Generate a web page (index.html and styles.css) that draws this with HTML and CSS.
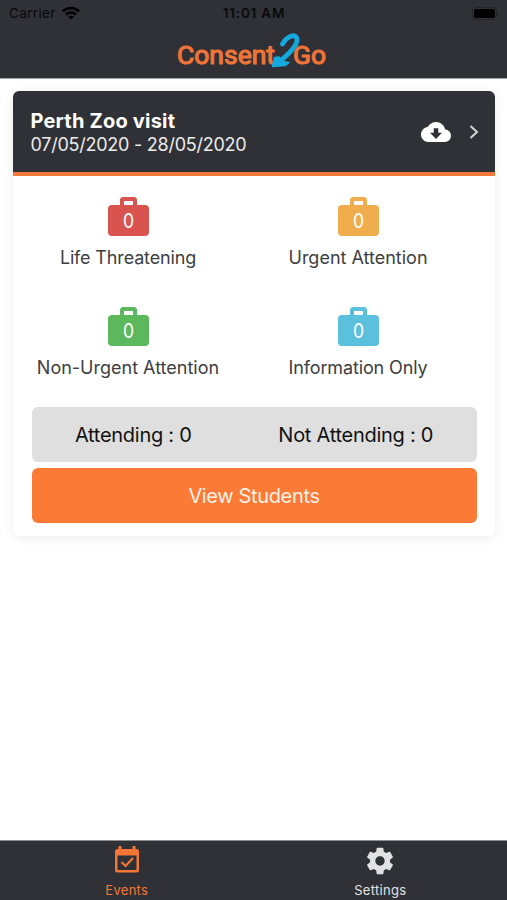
FILE: index.html
```html
<!DOCTYPE html>
<html lang="en">

<head>
    <meta charset="UTF-8">
    <meta name="viewport" content="width=device-width, initial-scale=1.0">
    <title>Consent2Go</title>
    <link rel="stylesheet" href="styles.css">
</head>

<body>
    <header class="top-bar">
        <div class="status">
            <div class="carrier">
                <span>Carrier</span>
                <svg width="18" height="14" viewBox="0 0 18 14" fill="none" stroke="#000" stroke-width="2.6">
                    <path d="M1 5.2C5.5 .9 12.500 .9 17 5.200" />
                    <path d="M4 8.500C6.800 5.800 11.200 5.800 14 8.500" />
                    <path d="M9 13.500L6.200 10.700C7.700 9.300 10.300 9.300 11.800 10.700Z" fill="#000" stroke="none" />
                </svg>
            </div>
            <span class="time">11:01 AM</span>
            <svg class="battery" width="27" height="13" viewBox="0 0 27 13">
                <rect x=".5" y=".5" width="24" height="12" rx="3.500" fill="none" stroke="#242528" />
                <rect x="2" y="2" width="21" height="9" rx="2" fill="#000" />
                <path d="M25.500 4.500q1.500 2 0 4z" fill="#202124" />
            </svg>
        </div>
        <svg class="logo" width="150" height="38" viewBox="0 0 150 38">
            <g class="logo-text">
                <text x="0" y="31.500" textLength="98" lengthAdjust="spacingAndGlyphs">Consent</text>
                <text x="116" y="31.500" textLength="33" lengthAdjust="spacingAndGlyphs">Go</text>
            </g>
            <path d="M105.500 12C109 5 117 1.500 119.500 5.500C122.500 11.500 112 22 102 30" fill="none" stroke="#14a9dc" stroke-width="4.800" stroke-linecap="round" />
            <path d="M95.500 34.500L97.500 25.500L102 25L105.500 29.500L112 30.500L108.500 33.500Z" fill="#14a9dc" stroke="#14a9dc" stroke-width="1.500" stroke-linejoin="round" />
        </svg>
    </header>

    <main>
        <div class="card">
            <div class="card-header">
                <div class="event">
                    <h1>Perth Zoo visit</h1>
                    <p>07/05/2020 - 28/05/2020</p>
                </div>
                <svg class="cloud" width="30" height="20" viewBox="0 4 24 16" preserveAspectRatio="none">
                    <path fill="#fff" d="M19.350 10.040C18.670 6.590 15.640 4 12 4 9.110 4 6.600 5.640 5.350 8.040 2.340 8.360 0 10.910 0 14c0 3.310 2.690 6 6 6h13c2.760 0 5-2.240 5-5 0-2.640-2.050-4.780-4.650-4.960z" />
                    <path fill="#303136" d="M10.200 9h3.600v3.600H16.800L12 17.600 7.200 12.600h3z" />
                </svg>
                <svg class="chevron" width="10" height="14" viewBox="0 0 10 14" fill="none" stroke="#d5d5d7" stroke-width="2">
                    <path d="M1.500 1L8 7l-6.500 6" />
                </svg>
            </div>

            <div class="alerts">
                <div class="alert">
                    <div class="case red"><span>0</span></div>
                    <p class="life">Life Threatening</p>
                </div>
                <div class="alert">
                    <div class="case yellow"><span>0</span></div>
                    <p class="urgent">Urgent Attention</p>
                </div>
                <div class="alert">
                    <div class="case green"><span>0</span></div>
                    <p class="non-urgent">Non-Urgent Attention</p>
                </div>
                <div class="alert">
                    <div class="case blue"><span>0</span></div>
                    <p class="info">Information Only</p>
                </div>
            </div>

            <div class="attendance">
                <span>Attending : 0</span>
                <span>Not Attending : 0</span>
            </div>
            <button class="view-btn" type="button">View Students</button>
        </div>
    </main>

    <nav class="tabs">
        <a class="tab active">
            <svg width="26" height="28" viewBox="0 0 26 28">
                <path fill="currentColor" fill-rule="evenodd" d="M4.500 0h3v3h11V0h3v3H22.500Q25 3 25 5.500V24Q25 26.500 22.500 26.500H3.500Q1 26.500 1 24V5.500Q1 3 3.500 3h1zM3.500 9.500V24h19V9.500z" />
                <path fill="none" stroke="currentColor" stroke-width="2.200" d="M7.500 16l4 4 7.500-8" />
            </svg>
            <span>Events</span>
        </a>
        <a class="tab">
            <svg width="32" height="32" viewBox="0 0 24 24">
                <path fill="currentColor" d="M19.430 12.980c.04-.32.070-.64.070-.98s-.03-.66-.07-.98l2.110-1.650c.19-.15.240-.42.120-.64l-2-3.460c-.12-.22-.39-.3-.61-.22l-2.490 1c-.52-.4-1.080-.73-1.690-.98l-.38-2.650C14.460 2.180 14.250 2 14 2h-4c-.25 0-.46.180-.49.420l-.38 2.650c-.61.250-1.170.590-1.690.980l-2.490-1c-.23-.09-.49 0-.61.220l-2 3.460c-.13.220-.07.490.120.640l2.110 1.650c-.04.320-.07.650-.07.980s.030.660.070.980l-2.110 1.650c-.19.150-.24.420-.12.640l2 3.460c.120.220.390.300.610.220l2.490-1c.520.400 1.080.730 1.690.980l.380 2.650c.030.240.240.420.490.420h4c.250 0 .460-.18.490-.42l.380-2.650c.610-.25 1.170-.59 1.690-.98l2.490 1c.230.090.490 0 .610-.22l2-3.460c.120-.22.070-.49-.12-.64l-2.110-1.650zM12 15.500c-1.930 0-3.500-1.570-3.500-3.500s1.570-3.500 3.500-3.500 3.500 1.570 3.500 3.500-1.570 3.500-3.500 3.500z" />
            </svg>
            <span>Settings</span>
        </a>
    </nav>
</body>

</html>
```

FILE: styles.css
```css
* {
    box-sizing: border-box;
}

body {
    font-family: Inter, "Liberation Sans", sans-serif;
    margin: 0;
    height: 900px;
    display: flex;
    flex-direction: column;
    background-color: #fff;
    overflow: hidden;
}

h1,
p {
    margin: 0;
}

svg {
    display: block;
    flex-shrink: 0;
}

.top-bar {
    height: 79px;
    background-color: #303136;
    border-bottom: 1px solid #a5a5a9;
}

.status {
    display: grid;
    grid-template-columns: 1fr auto 1fr;
    height: 26px;
    align-items: center;
    padding: 0 8px 0 9px;
    font-size: 13.5px;
    color: #08080a;
}

.carrier {
    display: flex;
    align-items: center;
    gap: 6px;
    letter-spacing: 0.35px;
}

.time {
    font-weight: 600;
    letter-spacing: 0.8px;
}

.battery {
    justify-self: end;
}

.logo {
    margin: 6px auto 0;
    position: relative;
    left: -2px;
}

.logo-text {
    font-family: Roboto, sans-serif;
    font-size: 26.5px;
    font-weight: 400;
    fill: #ee7439;
    stroke: #ee7439;
    stroke-width: 1.2;
    stroke-linejoin: round;
}

main {
    flex: 1;
    padding: 12px 12px 0 13px;
}

.card {
    height: 445px;
    border-radius: 6px;
    background-color: #fff;
    box-shadow: 0 2px 12px rgba(0, 0, 0, 0.08);
    overflow: hidden;
}

.card-header {
    display: flex;
    align-items: center;
    height: 85px;
    padding: 0 16px 0 17.5px;
    background-color: #303136;
    border-bottom: 4px solid #f47a39;
    color: #fff;
}

.event {
    flex: 1;
    padding-top: 2px;
}

.event h1 {
    font-size: 20px;
    line-height: 23px;
    font-weight: 700;
    letter-spacing: 0.2px;
}

.event p {
    font-size: 18px;
    line-height: 23px;
    letter-spacing: -0.25px;
    color: #ececee;
}

.chevron {
    margin-left: 18px;
}

.alerts {
    display: grid;
    grid-template-columns: 230px 230px;
    grid-auto-rows: 109.5px;
    padding-top: 21px;
    height: 231px;
}

.alert {
    display: flex;
    flex-direction: column;
    align-items: center;
}

.alert p {
    margin-top: 10px;
    font-size: 18px;
    line-height: 24px;
    color: #3e3e40;
    white-space: nowrap;
}

.alert .life {
    letter-spacing: -0.15px;
}

.alert .info {
    letter-spacing: -0.13px;
}

.case {
    position: relative;
    width: 41px;
    height: 31px;
    margin-top: 8px;
    border-radius: 4px;
    color: #fff;
    text-align: center;
    font-size: 20px;
    line-height: 32px;
}

.case span {
    display: block;
    transform: scaleX(0.88);
}

/* handle of the case */
.case::before {
    content: "";
    box-sizing: border-box;
    position: absolute;
    left: 12px;
    top: -8px;
    width: 17px;
    height: 8px;
    border: 4px solid;
    border-color: inherit;
    border-bottom: none;
    border-radius: 4px 4px 0 0;
}

.red {
    background-color: #d9534f;
    border-color: #d9534f;
}

.yellow {
    background-color: #f0ad4e;
    border-color: #f0ad4e;
}

.green {
    background-color: #5cb85c;
    border-color: #5cb85c;
}

.blue {
    background-color: #5bc0de;
    border-color: #5bc0de;
}

.attendance {
    display: flex;
    justify-content: space-around;
    align-items: center;
    height: 55px;
    margin: 0 18.5px;
    border-radius: 6px;
    background-color: #dfdfdf;
    color: #111;
    font-size: 20px;
    letter-spacing: -0.27px;
}

.view-btn {
    display: block;
    width: 445px;
    height: 55px;
    margin: 6px 18.5px 0;
    padding: 0;
    border: none;
    border-radius: 6px;
    background-color: #fb7b36;
    color: #fff1e8;
    font-family: inherit;
    font-size: 20px;
    letter-spacing: -0.35px;
}

.tabs {
    display: flex;
    height: 60px;
    background-color: #303136;
    border-top: 1px solid #8f8f92;
}

.tab {
    flex: 1;
    display: flex;
    flex-direction: column;
    align-items: center;
    justify-content: space-between;
    padding: 4px 0 1px;
    font-size: 13px;
    line-height: 18px;
    letter-spacing: 0.3px;
    color: #e2e2e4;
}

.tab.active {
    padding-top: 5px;
    color: #f37635;
}
```
